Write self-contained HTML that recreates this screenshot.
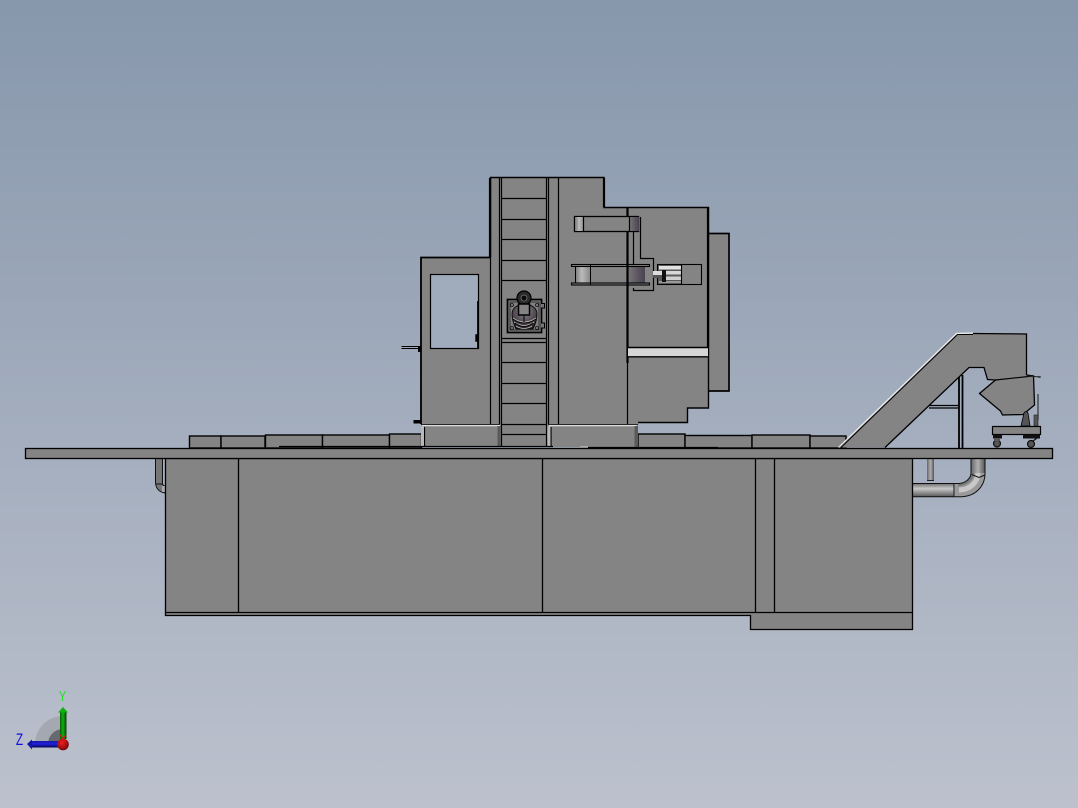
<!DOCTYPE html>
<html><head><meta charset="utf-8"><style>
html,body{margin:0;padding:0;width:1078px;height:808px;overflow:hidden;background:#a0abbb}
svg{display:block}
</style></head><body>
<svg width="1078" height="808" viewBox="0 0 1078 808" xmlns="http://www.w3.org/2000/svg">
<defs>
<linearGradient id="bg" x1="0" y1="0" x2="0" y2="1"><stop offset="0" stop-color="#8797ac"/><stop offset="1" stop-color="#bcc1cd"/></linearGradient>
<linearGradient id="cylL" x1="0" y1="0" x2="1" y2="0"><stop offset="0" stop-color="#777"/><stop offset=".45" stop-color="#bbb"/><stop offset="1" stop-color="#8a8a8a"/></linearGradient>
<linearGradient id="cylD" x1="0" y1="0" x2="1" y2="0"><stop offset="0" stop-color="#7a7a7a"/><stop offset=".6" stop-color="#5d5560"/><stop offset="1" stop-color="#4a4450"/></linearGradient>
<linearGradient id="pipeH" x1="0" y1="0" x2="0" y2="1"><stop offset="0" stop-color="#666"/><stop offset=".4" stop-color="#c8c8c8"/><stop offset="1" stop-color="#555"/></linearGradient>
<linearGradient id="pipeV" x1="0" y1="0" x2="1" y2="0"><stop offset="0" stop-color="#666"/><stop offset=".5" stop-color="#b0b0b0"/><stop offset="1" stop-color="#555"/></linearGradient>
<radialGradient id="ball" cx=".4" cy=".35" r=".7"><stop offset="0" stop-color="#f02020"/><stop offset="1" stop-color="#700808"/></radialGradient>
<linearGradient id="grn" x1="0" y1="0" x2="1" y2="0"><stop offset="0" stop-color="#0a5a0a"/><stop offset=".45" stop-color="#10b010"/><stop offset="1" stop-color="#064006"/></linearGradient>
<linearGradient id="blu" x1="0" y1="0" x2="0" y2="1"><stop offset="0" stop-color="#1818a0"/><stop offset=".45" stop-color="#2020e0"/><stop offset="1" stop-color="#060650"/></linearGradient>
<radialGradient id="spindle" cx=".5" cy=".3" r=".75"><stop offset="0" stop-color="#8a8a90"/><stop offset=".65" stop-color="#4a4048"/><stop offset="1" stop-color="#1c181c"/></radialGradient>
</defs>
<rect width="1078" height="808" fill="url(#bg)"/>

<g fill="#848484" stroke="#000" stroke-width="1.400">
<!-- back box -->
<rect x="708" y="233.5" width="21" height="157.5" stroke-width="1.700"/>
<!-- upper plates -->
<rect x="189.5" y="436" width="31.500" height="12"/>
<rect x="221" y="436" width="44" height="12"/>
<rect x="265.500" y="435" width="57" height="13"/>
<rect x="322.500" y="435" width="67" height="13"/>
<rect x="389.500" y="434" width="32" height="14"/>
<rect x="638" y="434" width="47" height="14"/>
<rect x="685" y="435.500" width="67" height="12.500"/>
<rect x="752" y="435" width="58" height="13"/>
<rect x="810" y="436" width="36" height="12"/>
<!-- tower -->
<path d="M490 177.500H604V207H708.500V408H687V422.500H638V447H421V257.500H490Z" stroke="none"/>
</g>
<path d="M490.500 257V177.500H604V207.500H708.500V408H687.500V422.500H638" fill="none" stroke="#000" stroke-width="1.400"/>
<path d="M421 424V257.500H490" fill="none" stroke="#000" stroke-width="1.800"/>
<path d="M490 178V257M604 178V207" stroke="#000" stroke-width="2.200" fill="none"/>
<path d="M708 207V348" stroke="#000" stroke-width="2.200" fill="none"/>
<!-- window -->
<rect x="430.500" y="274.500" width="48" height="74" fill="#a0abbb" stroke="#000" stroke-width="1.200"/>
<path d="M477.800 301V348M476 335h2v6h-2z" stroke="#000" stroke-width="1.400"/>
<!-- handle -->
<path d="M401.500 346.500H421M401.500 348.500H421" stroke="#000" stroke-width="1"/>
<rect x="418" y="347" width="3" height="5" fill="#000"/>
<rect x="413.500" y="420" width="8" height="3.500" fill="#000"/>
<!-- tower verticals -->
<path d="M490.500 177V424M499.500 177V424M501.500 177V447M546.500 177V447M548.500 177V424M558.500 177V424M627.500 363V424" stroke="#000" stroke-width="1.200" fill="none"/>
<path d="M627.500 207V363" stroke="#000" stroke-width="2.200" fill="none"/>
<path d="M501 198.500H547M501 219.500H547M501 239.500H547M501 260.500H547M501 280.500H547M501 338.500H547M501 342.500H547M501 362.500H547M501 383.500H547M501 403.500H547M501 424.500H547M501 434.500H547" stroke="#000" stroke-width="1.200"/>
<!-- feet -->
<path d="M421 424H500V447H421Z M548 424H638V447H548Z" fill="#848484" stroke="none"/>
<path d="M422 425.500H500M549 425.500H637" stroke="#ddd" stroke-width="1.500"/>
<path d="M421 424.500H500M548 424.500H638" stroke="#000" stroke-width=".8"/>
<path d="M424.500 427V446M498.500 427V446M551 427V446M636 427V446" stroke="#000" stroke-width="1.200"/>
<rect x="421" y="426" width="3" height="21" fill="#b8b8b8"/>
<rect x="497.500" y="426" width="3" height="21" fill="#5a5a5a"/>
<rect x="547.500" y="426" width="3" height="21" fill="#b8b8b8"/>
<rect x="634.500" y="426" width="3.500" height="21" fill="#5a5a5a"/>
<!-- long thin lines above table -->
<path d="M279 446.500H553" stroke="#000" stroke-width="1.200"/>
<path d="M580 447.500H718" stroke="#000" stroke-width="1.200"/>
<rect x="580" y="446" width="8" height="2" fill="#aaa"/>
<!-- top bar -->
<rect x="574.500" y="216.500" width="64" height="15" fill="#848484" stroke="#000" stroke-width="1.300"/>
<rect x="575" y="217" width="9" height="14" fill="url(#cylL)"/>
<rect x="629" y="217" width="10" height="14" fill="url(#cylD)"/>
<path d="M583.500 217V231M629.500 217V231" stroke="#000" stroke-width="1.200"/>
<path d="M640.500 217V258.500H653.500V290.500H633.500V288M633.500 231V265" fill="none" stroke="#000" stroke-width="1.200"/>
<!-- lower cylinder -->
<rect x="575" y="265" width="70" height="20" fill="#848484"/>
<rect x="575" y="265" width="15" height="20" fill="url(#cylL)"/>
<rect x="627" y="265" width="18" height="20" fill="url(#cylD)"/>
<rect x="571.500" y="264.500" width="78" height="2" fill="#848484" stroke="#000" stroke-width="1.100"/>
<rect x="571.500" y="283" width="78" height="2" fill="#848484" stroke="#000" stroke-width="1.100"/>
<path d="M575.500 266V283M590.500 265V285" stroke="#000" stroke-width="1"/>
<path d="M627.500 264V286" stroke="#000" stroke-width="2.200"/>
<!-- small cylinder box -->
<rect x="657.500" y="264.500" width="44" height="20" fill="#848484" stroke="#000" stroke-width="1.100"/>
<rect x="658" y="265" width="23" height="19" fill="#5a5a5a"/>
<rect x="659" y="266" width="22" height="3.500" fill="#e0e0e0"/>
<rect x="666" y="271" width="15" height="3.500" fill="#d8d8d8"/>
<rect x="666" y="276.500" width="15" height="3.500" fill="#d0d0d0"/>
<rect x="659" y="281" width="22" height="2" fill="#999"/>
<rect x="653" y="271" width="10" height="4" fill="#ddd"/>
<rect x="653" y="275" width="10" height="3" fill="#555"/>
<rect x="662" y="270" width="4" height="12" fill="#111"/>
<path d="M681.500 264.500V284.500" stroke="#000" stroke-width="1.100"/>
<!-- grey band -->
<rect x="628" y="348" width="80" height="8.500" fill="#d6d6d6"/>
<path d="M627.500 347.500H708M627.500 356.800H708" stroke="#000" stroke-width="1.400"/>

<!-- spindle unit -->
<rect x="507.500" y="299.500" width="34" height="33" fill="#808080" stroke="#000" stroke-width="1.700"/>
<rect x="510" y="302" width="29" height="28" fill="none" stroke="#222" stroke-width=".8"/>
<path d="M512 314C512 301 537 301 537 314C537 320 535 325 533 329L516 329C514 325 512 320 512 314Z" fill="url(#spindle)" stroke="#000" stroke-width=".8"/>
<path d="M513 318Q524 326 536 318M514 322Q524 329 534 322M516 326Q524 331 532 326" fill="none" stroke="#bbb" stroke-width=".8"/>
<path d="M513 319Q524 327 536 319M515 323Q524 330 533 323" fill="none" stroke="#000" stroke-width=".8"/>
<circle cx="524" cy="298" r="7" fill="#2a2a2a" stroke="#000" stroke-width="1.200"/>
<circle cx="524" cy="298" r="3" fill="#0a0a0a" stroke="#777" stroke-width=".8"/>
<rect x="518.500" y="304" width="11" height="11" fill="#848484" stroke="#000" stroke-width="1.500"/>
<path d="M524 315V322" stroke="#000" stroke-width="1"/>
<path d="M541 303.500H544.500V308H541M541 323H544.500V328H541" fill="#777" stroke="#000" stroke-width="1"/>
<g fill="none" stroke="#111" stroke-width=".8"><circle cx="512" cy="305" r="1.500"/><circle cx="537" cy="305" r="1.500"/><circle cx="512" cy="328" r="1.500"/><circle cx="537" cy="328" r="1.500"/></g>

<!-- pipes right -->
<rect x="927" y="459" width="7" height="22" fill="url(#pipeV)"/>
<path d="M927 480.500H934" stroke="#222" stroke-width="1"/>
<path d="M971 459H985V473C985 487 975 497 959 497H955V483H959C966 483 971 478 971 473Z" fill="#9a9a9a"/>
<path d="M978 459V473C978 482 970 490 959 490" fill="none" stroke="#c8c8c8" stroke-width="5"/>
<path d="M973 460V473C973 478 967 485 958 485" fill="none" stroke="#777" stroke-width="2.500"/>
<rect x="913" y="483" width="41" height="14" fill="url(#pipeH)"/>
<rect x="971" y="459" width="14" height="14" fill="url(#pipeV)"/>
<path d="M913 483.500H954M913 496.800H959C975 497 985 487 985 473V459M971 459V473C971 478 966 483 959 483.500H954M954 483V497M971.500 474.500L979 477.500 985 475" fill="none" stroke="#111" stroke-width="1"/>
<!-- pipe left -->
<rect x="155.500" y="459" width="7.500" height="26" fill="url(#pipeV)"/>
<path d="M155.500 459V483C156 488 159 492 165 493V486.500L162.500 484.500V459" fill="#777" stroke="#111" stroke-width="1"/>
<rect x="162" y="486" width="4" height="6" fill="#aaa"/>
<path d="M155.500 484H162.500" stroke="#111" stroke-width="1"/>

<!-- lower body -->
<path d="M165.500 458.500H912.500V629.500H750.500V615.500H165.500Z" fill="#848484" stroke="#000" stroke-width="1.300"/>
<path d="M165.500 612.500H912.500M238.500 459V612.500M542.500 459V612.500M755.500 459V612.500M774.500 459V612.500" stroke="#000" stroke-width="1.300" fill="none"/>
<!-- table -->
<rect x="25.500" y="448.500" width="1027" height="10" fill="#848484" stroke="#000" stroke-width="1.300"/>

<!-- conveyor stand -->
<path d="M959 375V448M962.500 375V448" stroke="#000" stroke-width="1.800"/>
<path d="M929 405.500H959M929 408H959" stroke="#000" stroke-width="1.200"/>
<!-- conveyor -->
<path d="M838.500 447.500L956.500 333.500L1026.500 334V375L1033 376L1034 405L1023 414.500L1002.500 415L1000.500 411L979.500 393.500L995.500 380L987.500 379.500L984 367.500L969 367.500L885 447.500Z" fill="#848484"/>
<path d="M838.500 447.500L956.500 333.500L973 333" fill="none" stroke="#eee" stroke-width="1.200"/>
<path d="M973 333.500L1026.500 334V375M1026.500 375L1033.500 376L1034.500 405L1023 414.500L1002.500 415L1000.500 411L979.500 393.500L995.500 380L987.500 379.500L984 367.500L969 367.500L885 447.500" fill="none" stroke="#000" stroke-width="1.300"/>
<path d="M957 334.500H973M841 447.500L957 335" stroke="#000" stroke-width="1"/>
<path d="M995.500 380L1033 376" stroke="#000" stroke-width="1.200"/>
<path d="M1027 376L1041 377M1039 376V378" stroke="#222" stroke-width="1"/>
<path d="M1038 394V420" stroke="#333" stroke-width="1.200"/>
<!-- cart -->
<path d="M1021 426L1024 413Q1026 410 1028 413L1030 426Z" fill="#555" stroke="#000" stroke-width=".8"/>
<rect x="1034" y="415" width="4" height="11" fill="#555" stroke="#222" stroke-width=".6"/>
<rect x="992.500" y="426.500" width="48" height="8" fill="#848484" stroke="#000" stroke-width="1.200"/>
<rect x="993" y="434.500" width="9" height="4" fill="#111"/>
<rect x="1023" y="434.500" width="17" height="4" fill="#111"/>
<circle cx="997" cy="443.500" r="3.500" fill="#555" stroke="#111" stroke-width="1.200"/>
<circle cx="1031" cy="444" r="3.500" fill="#555" stroke="#111" stroke-width="1.200"/>
<path d="M1033 441L1037 438" stroke="#111" stroke-width="1.200"/>
<rect x="994" y="438" width="6" height="3" fill="#555"/>

<!-- triad -->
<path d="M35 744A28 28 0 0 1 63 716V744Z" fill="#a4a8b0"/>
<path d="M48 744A15 15 0 0 1 63 729V744Z" fill="#666a70"/>
<rect x="60" y="712" width="6.500" height="27" fill="url(#grn)"/>
<path d="M63 707L68 712.500H58Z" fill="#10b010"/>
<rect x="30" y="741" width="29" height="6.500" fill="url(#blu)"/>
<path d="M27 744L32 739.500V749.500Z" fill="#1414a8"/>
<circle cx="63" cy="744.500" r="5.800" fill="url(#ball)"/>
<path d="M60 735L66 742M66 735L60 742" stroke="#e01010" stroke-width="1"/>
<text transform="translate(62.500 701) scale(.7 1)" font-family="Liberation Sans, sans-serif" font-size="15" fill="#20e020" text-anchor="middle">Y</text>
<text transform="translate(19.500 745) scale(.7 1)" font-family="Liberation Sans, sans-serif" font-size="17" fill="#1010e0" text-anchor="middle">Z</text>
</svg>
</body></html>
